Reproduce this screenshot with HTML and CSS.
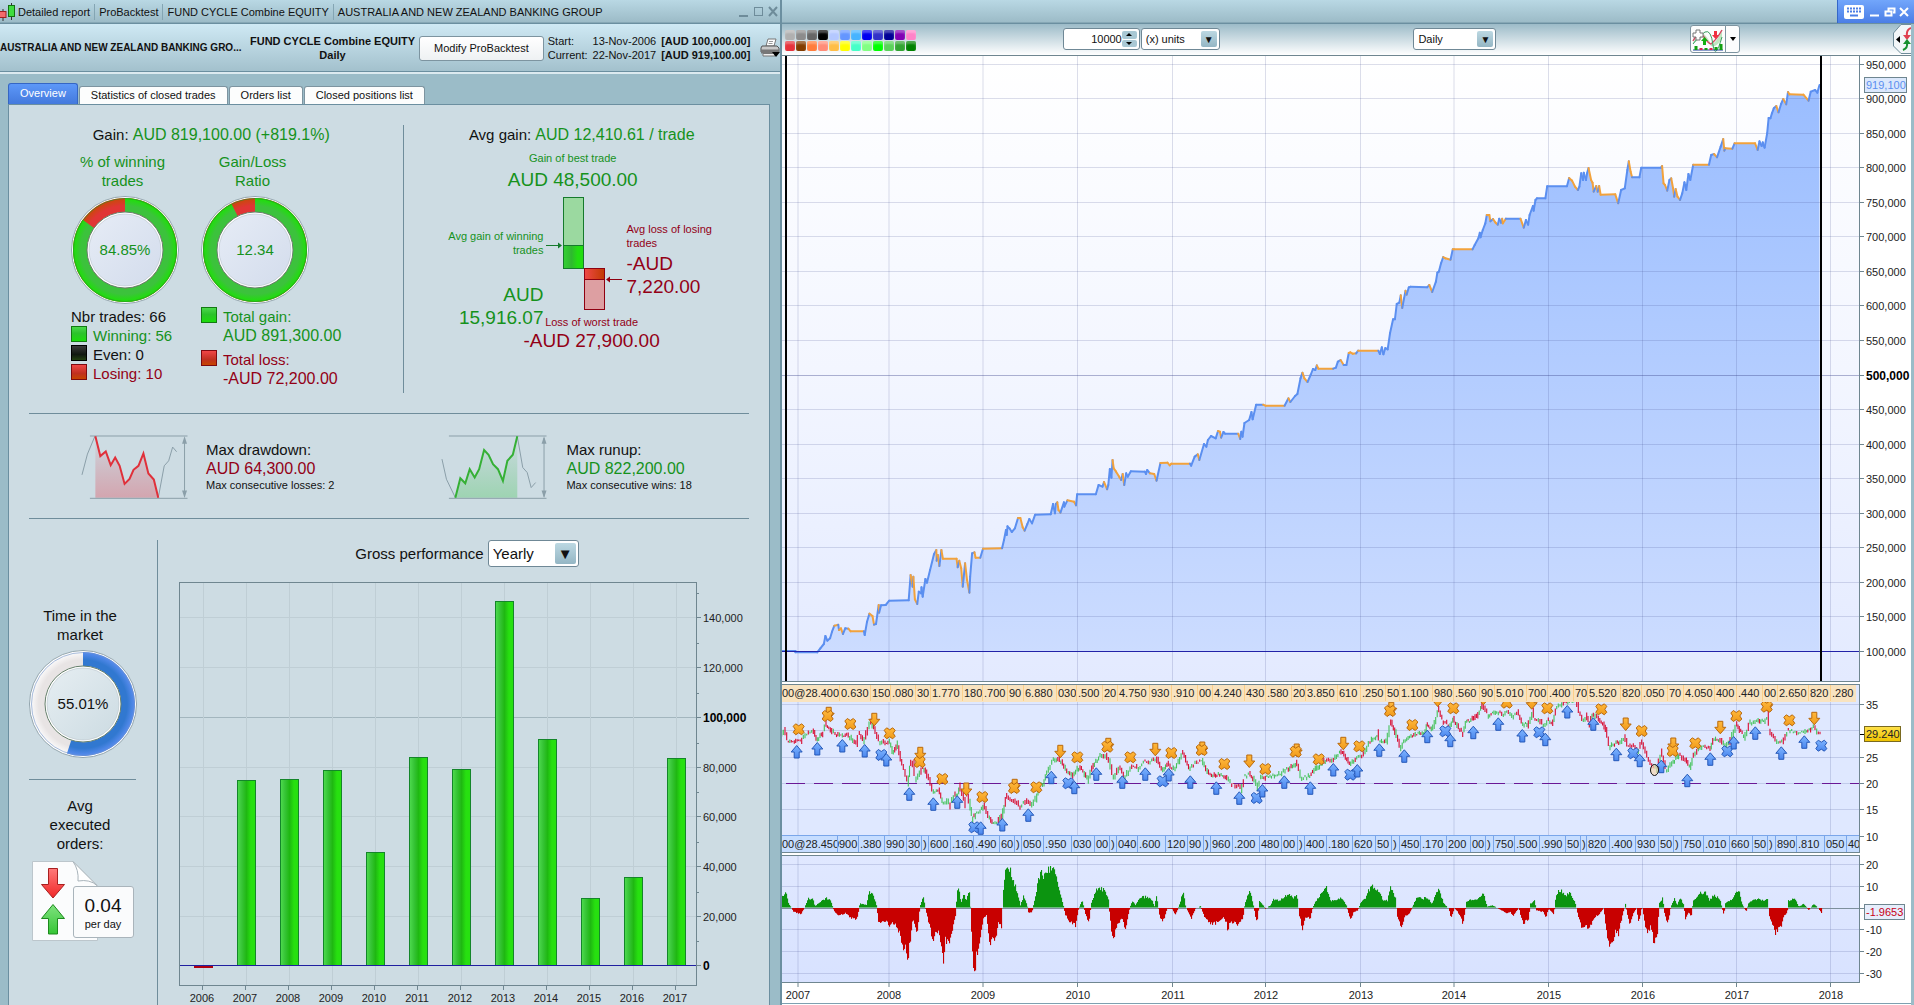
FILE: index.html
```
<!DOCTYPE html>
<html lang="en">
<head>
    <meta charset="UTF-8">
    <meta name="viewport" content="width=device-width, initial-scale=1.0">
    <title>Detailed report - ProBacktest</title>
    <link rel="stylesheet" href="styles.css">
</head>
<body>
    <section class="report">
        <div class="titlebar">
            <svg class="app-icon" width="16" height="18" viewBox="0 0 16 18">
                <path d="M3 6v12M11.500 0v17" stroke="#333"/>
                <rect x="-1" y="8.500" width="7" height="6" fill="#f36b6b" stroke="#a02020"/>
                <rect x="8.500" y="2.500" width="6" height="11" fill="#3fdc3f" stroke="#127012"/>
            </svg>
            <span>Detailed report</span>
            <span>ProBacktest</span>
            <span>FUND CYCLE Combine EQUITY</span>
            <span>AUSTRALIA AND NEW ZEALAND BANKING GROUP</span>
            <svg class="window-buttons" width="42" height="14" viewBox="0 0 42 14" fill="none" stroke="#6e8c9a" stroke-width="2">
                <path d="M1 11h9M31 2l8 9M39 2l-8 9"/>
                <rect x="16.500" y="2.500" width="8" height="8" stroke-width="1"/>
            </svg>
        </div>
        <header class="summary">
            <strong class="instrument">AUSTRALIA AND NEW ZEALAND BANKING GRO...</strong>
            <strong class="system">FUND CYCLE Combine EQUITY<br>Daily</strong>
            <button class="modify">Modify ProBacktest</button>
            <dl class="dates">
                <dt>Start:</dt><dd>13-Nov-2006</dd><dd><b>[AUD 100,000.00]</b></dd>
                <dt>Current:</dt><dd>22-Nov-2017</dd><dd><b>[AUD 919,100.00]</b></dd>
            </dl>
            <button class="print" aria-label="Print">
                <svg width="20" height="20" viewBox="0 0 20 20">
                    <path d="M6 8l2-7h8l-2 7z" fill="#fff" stroke="#777"/>
                    <path d="M9 3.500h4M8.500 5.500h4" stroke="#999"/>
                    <path d="M2 8h15l2 2v4H1v-4z" fill="#c9c9c9" stroke="#555"/>
                    <path d="M1 11.500h18v4H1z" fill="#777"/>
                    <path d="M3 15.500h12v2.500H3z" fill="#eee" stroke="#777"/>
                    <path d="M12 14h8l-4 5z" fill="#000"/>
                </svg>
            </button>
        </header>
        <nav class="tabs">
            <a href="#overview" class="active">Overview</a>
            <a href="#stats">Statistics of closed trades</a>
            <a href="#orders">Orders list</a>
            <a href="#closed">Closed positions list</a>
        </nav>
        <div class="panel" id="overview">
            <div class="top">
                <div class="gains">
                    <h2>Gain: <span class="amount win">AUD 819,100.00 (+819.1%)</span></h2>
                    <div class="donuts">
                        <div class="stat">
                            <h3 class="win">% of winning<br>trades</h3>
                            <svg class="donut" data-share="84.85" data-kind="trade" data-label="84.85%"></svg>
                            <ul>
                                <li class="plain">Nbr trades: 66</li>
                                <li class="win"><i class="chip green"></i>Winning: 56</li>
                                <li><i class="chip black"></i>Even: 0</li>
                                <li class="loss"><i class="chip red"></i>Losing: 10</li>
                            </ul>
                        </div>
                        <div class="stat">
                            <h3 class="win">Gain/Loss<br>Ratio</h3>
                            <svg class="donut" data-share="92.5" data-kind="trade" data-label="12.34"></svg>
                            <ul class="totals">
                                <li class="win"><i class="chip green"></i><span>Total gain:<br><span class="amount">AUD 891,300.00</span></span></li>
                                <li class="loss"><i class="chip red"></i><span>Total loss:<br><span class="amount">-AUD 72,200.00</span></span></li>
                            </ul>
                        </div>
                    </div>
                </div>
                <div class="averages">
                    <h2>Avg gain: <span class="amount win">AUD 12,410.61 / trade</span></h2>
                    <p class="best win"><small>Gain of best trade</small><b>AUD 48,500.00</b></p>
                    <div class="trade-range">
                        <p class="avg-win win"><small>Avg gain of winning<br>trades</small><b>AUD<br>15,916.07</b></p>
                        <svg class="range-bars" width="83" height="116" viewBox="543 196 83 116">
                            <defs>
                                <linearGradient id="rg"><stop offset="0" stop-color="#35d035"/><stop offset=".4" stop-color="#2fb82f"/><stop offset=".7" stop-color="#22dd11"/></linearGradient>
                                <linearGradient id="rr"><stop offset="0" stop-color="#f04848"/><stop offset="1" stop-color="#c03a00"/></linearGradient>
                            </defs>
                            <rect x="563.500" y="197.500" width="20" height="48" fill="#9bd9a0" stroke="#157a2c"/>
                            <rect x="563.500" y="245.500" width="20" height="23" fill="url(#rg)" stroke="#157a2c"/>
                            <rect x="584.500" y="268.500" width="20" height="11" fill="url(#rr)" stroke="#8f0010"/>
                            <rect x="584.500" y="279.500" width="20" height="30" fill="#dd9fa2" stroke="#8f0010"/>
                            <path d="M546 245.500h15" stroke="#157a2c"/><path d="M558 242.500l4 3-4 3z" fill="#157a2c"/>
                            <path d="M607 279.500h15" stroke="#8f0010"/><path d="M610 276.500l-4 3 4 3z" fill="#8f0010"/>
                        </svg>
                        <p class="avg-loss loss"><small>Avg loss of losing<br>trades</small><b>-AUD<br>7,220.00</b></p>
                        <p class="worst loss"><small>Loss of worst trade</small><b>-AUD 27,900.00</b></p>
                    </div>
                </div>
            </div>
            <div class="extremes">
                <div class="extreme">
                    <svg width="109" height="67" viewBox="160 100 220 200" preserveAspectRatio="none" fill="none">
                        <defs><linearGradient id="dd" x2="0" y2="1"><stop offset="0" stop-color="#d03040" stop-opacity=".02"/><stop offset="1" stop-color="#e04050" stop-opacity=".35"/></linearGradient></defs>
                        <path d="M191 107L201 166 212 152 222 193 231 170 240 195 250 249 260 234 268 207 278 195 288 158 298 218 309 236 318 290H191z" fill="url(#dd)"/>
                        <path class="faint" d="M180 106H377M180 292H377M371 112V287M164 222L175 160 190 107M318 290L330 195 339 180 347 139 355 153"/>
                        <path d="M371 107l5 22h-10zM371 291l5-22h-10z" fill="#8b9fa9"/>
                        <path class="trend" stroke="#e0303a" d="M191 107L201 166 212 152 222 193 231 170 240 195 250 249 260 234 268 207 278 195 288 158 298 218 309 236 318 290"/>
                    </svg>
                    <p>Max drawdown:<br><span class="amount loss">AUD 64,300.00</span><small>Max consecutive losses: 2</small></p>
                </div>
                <div class="extreme">
                    <svg width="109" height="67" viewBox="887 100 220 200" preserveAspectRatio="none" fill="none">
                        <defs><linearGradient id="ru" x2="0" y2="1"><stop offset="0" stop-color="#30b040" stop-opacity=".02"/><stop offset="1" stop-color="#30c040" stop-opacity=".3"/></linearGradient></defs>
                        <path d="M918 290L928 232 938 247 947 205 957 230 966 205 976 148 985 162 994 190 1004 205 1014 240 1023 180 1034 162 1043 107V290z" fill="url(#ru)"/>
                        <path class="faint" d="M905 106H1102M905 292H1102M1097 112V287M891 175L900 235 918 290M1043 107L1054 200 1063 215 1071 260 1080 245"/>
                        <path d="M1097 107l5 22h-10zM1097 291l5-22h-10z" fill="#8b9fa9"/>
                        <path class="trend" stroke="#35b035" d="M918 290L928 232 938 247 947 205 957 230 966 205 976 148 985 162 994 190 1004 205 1014 240 1023 180 1034 162 1043 107"/>
                    </svg>
                    <p>Max runup:<br><span class="amount win">AUD 822,200.00</span><small>Max consecutive wins: 18</small></p>
                </div>
            </div>
            <div class="bottom">
                <div class="activity">
                    <h3>Time in the<br>market</h3>
                    <svg class="donut" data-share="55.01" data-kind="market" data-label="55.01%"></svg>
                    <hr>
                    <h3>Avg<br>executed<br>orders:</h3>
                    <div class="orders">
                        <svg width="66" height="80" viewBox="0 0 66 80">
                            <defs>
                                <linearGradient id="od" x2="0" y2="1"><stop offset="0" stop-color="#ff7a7a"/><stop offset="1" stop-color="#f02828"/></linearGradient>
                                <linearGradient id="ou" x2="0" y2="1"><stop offset="0" stop-color="#7fe27f"/><stop offset="1" stop-color="#35c535"/></linearGradient>
                            </defs>
                            <path d="M.5.5H41L65.500 25V79.500H.5z" fill="#fbfcfd" stroke="#bcc6cc"/>
                            <path d="M41 .5Q47 9 46 20 58 18 65 24.500z" fill="#fff" stroke="#a9b4bb"/>
                            <path d="M16.500 7.500h9v16h7L21 37 9.500 23.500h7z" fill="url(#od)" stroke="#a82020"/>
                            <path d="M21 43.500L32.500 57.500h-7v15.500h-9V57.500h-7z" fill="url(#ou)" stroke="#1d8a1d"/>
                        </svg>
                        <p class="per-day"><b>0.04</b><small>per day</small></p>
                    </div>
                </div>
                <div class="performance">
                    <div class="period">
                        <label for="period">Gross performance</label>
                        <span class="dropdown large"><select id="period"><option>Yearly</option><option>Monthly</option></select></span>
                    </div>
                    <svg id="gross" viewBox="170 576 590 430"></svg>
                </div>
            </div>
        </div>
    </section>

    <section class="workspace">
        <div class="titlebar">
            <div class="system-buttons">
                <svg width="70" height="16" viewBox="0 0 70 16">
                    <rect y="1" width="20" height="14" rx="2" fill="#fff"/>
                    <path d="M3 4.500h14M3 7.500h14" stroke="#4c7fe6" stroke-width="2" stroke-dasharray="2 1"/>
                    <path d="M6 11.500h8" stroke="#4c7fe6" stroke-width="2"/>
                    <path d="M26 11.500h9M56 4l8 8M64 4l-8 8" stroke="#fff" stroke-width="2"/>
                    <path d="M44.500 7V4.500h6v4H49M41.500 7.500h6v4h-6z" fill="none" stroke="#fff" stroke-width="2"/>
                </svg>
            </div>
        </div>
        <div class="toolbar">
            <div class="swatches" id="swatches"></div>
            <div class="quantity">
                <span class="spinner"><input type="text" value="10000" aria-label="Quantity"><span class="steps"><button aria-label="More"></button><button aria-label="Less"></button></span></span>
                <span class="dropdown"><select aria-label="Units"><option>(x) units</option></select></span>
            </div>
            <span class="dropdown timeframe"><select aria-label="Timeframe"><option>Daily</option></select></span>
            <div class="indicators">
                <button aria-label="Add indicator">
                    <svg width="34" height="25" viewBox="0 0 34 25" fill="none">
                        <path d="M2 16Q9 2 14 8t6 10Q25 16 31 4V11Q26 21 20 19 15 8 10 11T2 17z" fill="#bfe6c0"/>
                        <path d="M2 14Q8 3 13 10T20 17Q26 12 31 3" stroke="#d24b63" stroke-width="1.500"/>
                        <path d="M2 17Q8 8 14 5T22 18 31 10" stroke="#38a060"/>
                        <path d="M5 3h4v3h3v4H9v3H5v-3H2V6h3z" fill="#fff" stroke="#777"/>
                        <path d="M23 4h3v4h2l-3.500 4L21 8h2z" fill="#f03040"/>
                        <path d="M12 18v-4h-2l3.500-4 3.500 4h-2v4z" fill="#12b012"/>
                        <path d="M2 23h30" stroke="#1c3f9a"/>
                        <path d="M5 19v4M15 21v2M25 20v3M30 17v6" stroke="#12a012" stroke-width="3"/>
                        <path d="M10 21v2M20 21v2" stroke="#e02050" stroke-width="3"/>
                    </svg>
                </button>
                <button class="more" aria-label="More indicators"></button>
            </div>
            <button class="side-tab" aria-label="Open trading panel">
                <svg width="18" height="30" viewBox="0 0 18 30" fill="none">
                    <path d="M18 .5H8L.5 9V22L8 29.500h10" fill="#f2f6f8" stroke="#6f8c9a"/>
                    <path d="M7 12v7l-4-3.500z" fill="#000"/>
                    <path d="M18 4Q13 6 14 12" stroke="#e04050" stroke-width="2"/><path d="M10 11h8l-4 5z" fill="#e04050"/>
                    <path d="M10 20h8l-4-5z" fill="#189030"/><path d="M14 19Q15 24 10 26" stroke="#189030" stroke-width="2"/>
                </svg>
            </button>
        </div>
        <div class="charts">
            <svg id="equity" viewBox="782 56 1129 627"></svg>
            <svg id="price" viewBox="782 683 1129 171"></svg>
            <svg id="oscillator" viewBox="782 854 1129 151"></svg>
        </div>
    </section>
    <script src="charts.js"></script>
</body>
</html>
```
FILE: styles.css
```
* {
    box-sizing: border-box;
}

html, body {
    height: 100%;
    margin: 0;
}

body {
    display: grid;
    grid-template-columns: 782fr 1132fr;
    grid-template-rows: 100%;
    overflow: hidden;
    background: #9bbcc8;
    color: #111;
    font: 11px/14px "Liberation Sans", Arial, sans-serif;
}

h2, h3, p, ul, dl, dd {
    margin: 0;
    padding: 0;
    font-weight: normal;
}

button, input, select {
    font: inherit;
    color: inherit;
}

.win {
    color: #16921c;
}
.loss {
    color: #930016;
}
.amount {
    font-size: 16px;
}

.titlebar {
    display: flex;
    flex: none;
    align-items: center;
    height: 24px;
    background: linear-gradient(#b9d8e4, #9bbac6);
    border-bottom: 1px solid #6b8fa0;
    box-shadow: inset 0 -1px #86a7b5;
    white-space: nowrap;
}

/* report window */
.report {
    display: flex;
    flex-direction: column;
    min-width: 0;
    overflow: hidden;
    border-right: 2px solid #6b8fa0;
}
.report .titlebar span {
    padding-right: 4px;
    line-height: 16px;
}
.report .titlebar span + span {
    padding-left: 4px;
    border-left: 1px solid #84a5b3;
}
.app-icon {
    margin-right: 2px;
}
.window-buttons {
    margin-left: auto;
}

.summary {
    display: flex;
    flex: none;
    align-items: center;
    gap: 4px;
    height: 50px;
    background: linear-gradient(#cfe9f4, #a2c0cc);
    border-bottom: 2px solid #dceaf0;
    box-shadow: 0 -1px #6b8fa0 inset;
    white-space: nowrap;
}
.instrument {
    flex: 0 1 246px;
    min-width: 0;
    font-size: 10px;
}
.system {
    text-align: center;
}
.modify {
    height: 25px;
    padding: 0 14px;
    border: 1px solid #7d94a0;
    border-radius: 3px;
    background: linear-gradient(#fff, #eef1f3);
}
.dates {
    display: grid;
    grid-template-columns: repeat(3, auto);
    gap: 0 5px;
}
.print {
    margin-left: auto;
    padding: 0;
    height: 20px;
    border: 0;
    background: none;
}

.tabs {
    display: flex;
    flex: none;
    align-items: flex-end;
    gap: 1px;
    height: 30px;
    padding-left: 8px;
}
.tabs a {
    height: 18px;
    padding: 0 11px;
    border: 1px solid #7d94a0;
    border-bottom: 0;
    border-radius: 3px 3px 0 0;
    background: #fcfdfd;
    color: #111;
    line-height: 17px;
    text-decoration: none;
}
.tabs .active {
    height: 21px;
    background: linear-gradient(#5d98f8, #4379dd);
    border-color: #3566c4;
    color: #fff;
    line-height: 19px;
}

.panel {
    display: flex;
    flex: 1;
    flex-direction: column;
    margin: 0 10px 0 8px;
    padding: 20px 20px 0;
    border: 1px solid #6b8fa0;
    border-bottom: 0;
    background: #cddce3;
    font-size: 15px;
    line-height: 19px;
}
.panel h2, .panel h3 {
    font-size: 15px;
    line-height: 19px;
    text-align: center;
}
.panel small {
    display: block;
    font-size: 11px;
    line-height: 14px;
}
.panel p b {
    display: block;
    font-size: 19px;
    font-weight: normal;
    line-height: 23px;
}

.top {
    display: grid;
    grid-template-columns: 376fr 345fr;
    padding-bottom: 20px;
    border-bottom: 1px solid #6f8d9b;
}
.gains {
    height: 268px;
    border-right: 1px solid #6f8d9b;
}
.donuts {
    display: flex;
    gap: 22px;
    margin-top: 6px;
    padding-left: 42px;
}
.stat {
    width: 108px;
    white-space: nowrap;
}
.stat h3, .activity h3 {
    padding-right: 5px;
}
.donut {
    display: block;
    width: 108px;
    height: 108px;
    margin: 6px 0 3px;
}
.stat ul {
    list-style: none;
}
.stat li {
    display: flex;
    gap: 6px;
}
.totals li {
    margin-bottom: 5px;
}
.chip {
    flex: none;
    width: 16px;
    height: 16px;
    border: 1px solid #127a12;
}
.green {
    background: linear-gradient(#4bd84b, #2cc22c 45%, #1bdc0b);
}
.black {
    background: linear-gradient(#3a3a3a, #101810 60%, #224010);
    border-color: #000;
}
.red {
    background: linear-gradient(#f04646, #c03020 60%, #c64500);
    border-color: #7d0a10;
}
.gains h2, .averages h2 {
    height: 21px;
}
.gains h2 {
    padding-right: 10px;
}
.averages h2 {
    padding-left: 10px;
}

.best {
    padding-top: 5px;
    padding-right: 8px;
    text-align: center;
}
.best b {
    margin-top: 3px;
}
.trade-range {
    display: grid;
    grid-template-columns: 139px 83px 1fr;
    grid-template-rows: 118px auto;
    margin-top: 5px;
    white-space: nowrap;
}
.avg-win {
    grid-row: 1 / 3;
    padding-top: 33px;
    text-align: right;
}
.avg-win b {
    margin-top: 26px;
}
.avg-loss {
    padding-top: 26px;
}
.avg-loss b {
    margin-top: 2px;
}
.worst {
    grid-column: 2 / 4;
    grid-row: 2;
    justify-self: start;
    margin-top: 1px;
    margin-left: -20px;
    text-align: center;
}
.worst b {
    line-height: 28px;
}

.extremes {
    display: grid;
    grid-template-columns: 361fr 309fr;
    height: 105px;
    padding: 20px 0 0 51px;
    border-bottom: 1px solid #6f8d9b;
}
.extreme {
    display: flex;
    gap: 17px;
}
.extreme p {
    padding-top: 6px;
    white-space: nowrap;
}
.faint {
    stroke: #8b9fa9;
    vector-effect: non-scaling-stroke;
}
.trend {
    stroke-width: 2;
    vector-effect: non-scaling-stroke;
}

.bottom {
    display: grid;
    flex: 1;
    grid-template-columns: 129px 1fr;
    margin: 21px -20px 0 0;
}
.activity {
    display: flex;
    flex-direction: column;
    align-items: center;
    padding: 66px 21px 0 0;
    border-right: 1px solid #6f8d9b;
}
.activity hr {
    width: 100%;
    margin: 18px 0 16px;
    border: 0;
    border-top: 1px solid #6f8d9b;
}
.orders {
    position: relative;
    margin-top: 8px;
    padding-right: 36px;
}
.orders svg {
    display: block;
}
.per-day {
    position: absolute;
    right: 0;
    bottom: 3px;
    width: 61px;
    height: 52px;
    padding-top: 7px;
    border: 1px solid #a9b4bb;
    border-radius: 3px;
    background: #fafbfc;
    text-align: center;
}
.performance {
    padding: 0 9px 0 12px;
}
.period {
    display: flex;
    justify-content: center;
    align-items: center;
    gap: 4px;
    padding-left: 4px;
}
#gross {
    display: block;
    width: 100%;
    margin-top: 9px;
}

/* form controls */
.dropdown {
    position: relative;
    display: block;
    width: 79px;
    height: 22px;
}
.dropdown select {
    width: 100%;
    height: 100%;
    padding: 0 4px;
    border: 1px solid #6f8896;
    border-radius: 3px;
    background: #fff;
    appearance: none;
}
.dropdown::after {
    content: "\25BC";
    position: absolute;
    top: 3px;
    right: 3px;
    bottom: 3px;
    width: 16px;
    border-radius: 2px;
    background: linear-gradient(#bcd8e2, #94b6c4);
    font-size: 10px;
    line-height: 17px;
    text-align: center;
    pointer-events: none;
}
.large {
    width: 91px;
    height: 27px;
}
.large::after {
    width: 21px;
    font-size: 15px;
    line-height: 21px;
}
.spinner {
    display: flex;
    width: 77px;
    height: 22px;
    padding: 2px;
    border: 1px solid #6f8896;
    border-radius: 3px;
    background: #fff;
}
.spinner input {
    width: 56px;
    padding: 0;
    border: 0;
    background: none;
    text-align: right;
}
.steps {
    display: flex;
    flex-direction: column;
    gap: 1px;
    margin-left: auto;
}
.steps button {
    display: flex;
    flex: 1;
    justify-content: center;
    align-items: center;
    width: 15px;
    padding: 0;
    border: 0;
    border-radius: 2px;
    background: #a9c8d4;
}
.steps button::after, .more::after {
    content: "";
    border: 3px solid transparent;
    border-top: 0;
    border-bottom-color: #000;
}
.steps button + button::after {
    border-top: 3px solid #000;
    border-bottom: 0;
}

/* chart workspace */
.workspace {
    display: flex;
    flex-direction: column;
    min-width: 0;
    border-right: 3px solid #9bbcc8;
    background: #fff;
}
.workspace .titlebar {
    justify-content: flex-end;
    margin-right: -3px;
}
.system-buttons {
    display: flex;
    align-items: center;
    height: 23px;
    padding: 0 0 0 6px;
    background: linear-gradient(#72a6fb, #4b7ee6);
    border-left: 1px solid #3467c8;
}
.toolbar {
    position: relative;
    display: grid;
    grid-template-columns: 281fr 351fr 277fr 203fr 18px;
    flex: none;
    height: 32px;
    background: linear-gradient(#9cbbc8, #fff);
    border-bottom: 1px solid #6f8690;
}
.swatches {
    display: grid;
    grid-template-columns: repeat(12, 10px);
    gap: 1px;
    align-content: center;
    padding-left: 3px;
}
.swatches button {
    height: 10px;
    padding: 0;
    border: 0;
    border-radius: 2px;
    box-shadow: inset 0 3px 2px rgba(255, 255, 255, 0.3);
}
.quantity {
    display: flex;
    gap: 1px;
    padding-top: 4px;
}
.timeframe {
    width: 83px;
    margin-top: 4px;
}
.indicators {
    display: flex;
    margin-top: 1px;
}
.indicators button {
    display: flex;
    justify-content: center;
    align-items: center;
    width: 36px;
    height: 28px;
    padding: 0;
    border: 1px solid #7d94a0;
    border-radius: 3px 0 0 3px;
    background: #fcfdfd;
}
.indicators .more {
    width: 15px;
    margin-left: -1px;
    border-radius: 0 3px 3px 0;
}
.more::after {
    border-top: 4px solid #000;
    border-bottom: 0;
}
.side-tab {
    padding: 0;
    border: 0;
    background: none;
}
.charts {
    flex: 1;
    min-height: 0;
}
.charts svg {
    display: block;
    width: 100%;
}

/* svg text */
svg text {
    font-size: 11px;
    fill: #222;
}
svg .major {
    font-size: 12px;
    font-weight: bold;
    fill: #000;
}
svg .center {
    text-anchor: middle;
}
.donut text {
    font-size: 15px;
}
```
FILE: charts.js
```
const INK = '#6f8690';
const YEARS_X = [798, 889, 983, 1077.5, 1172.5, 1265.5, 1360.5, 1454, 1548.5, 1642.5, 1736.5, 1830.5];

// small repeatable noise so the charts look the same on each load
let seed = 7;
function noise() {
    seed = (seed * 16807) % 2147483647;
    return seed / 2147483647;
}

function line(x1, y1, x2, y2, color, width = 1, dash = '') {
    return `<path d="M${x1} ${y1}L${x2} ${y2}" stroke="${color}" stroke-width="${width}" ${dash && `stroke-dasharray="${dash}"`} fill="none"/>`;
}
function text(x, y, label, cls = '') {
    return `<text x="${x}" y="${y}" class="${cls}">${label}</text>`;
}
function rect(x, y, w, h, fill, more = '') {
    return `<rect x="${x}" y="${y}" width="${w}" height="${h}" fill="${fill}" ${more}/>`;
}
function gradient(id, stops, dir = 'x2="0" y2="1"') {
    return `<linearGradient id="${id}" ${dir}>` + stops.map((c, i) => `<stop offset="${i / (stops.length - 1)}" stop-color="${c}"/>`).join('') + '</linearGradient>';
}
function points(str, x0, y0, kx, ky) {
    return str.trim().split(/\s+/).map(p => {
        const [x, y] = p.replace('o', '').split(',').map(Number);
        return { x: x0 + x / kx, y: y0 + y / ky, down: p[0] == 'o' };
    });
}

// toolbar colours
const colors = ['#b0b0b0', '#8c8c8c', '#666', '#000', '#b4c8ff', '#6496ff', '#46b4ff', '#0000f0', '#3232c8', '#000096', '#8200b4', '#ff82c8',
    '#e6323c', '#823c00', '#ff7d3c', '#ff8c78', '#ffbe46', '#ffff00', '#46ffc8', '#82ff82', '#00ff00', '#5ad25a', '#32a532', '#008200'];
document.getElementById('swatches').innerHTML = colors.map(c => `<button aria-label="${c}" style="background-color: ${c}"></button>`).join('');

// donuts
document.querySelectorAll('.donut').forEach((svg, i) => {
    const market = svg.dataset.kind == 'market';
    const share = Number(svg.dataset.share);
    const angle = share / 100 * 2 * Math.PI;
    const x = 54 + 45 * Math.sin(angle), y = 54 - 45 * Math.cos(angle);
    const ring = (id, a, b) => `<radialGradient id="${id}${i}" gradientUnits="userSpaceOnUse" cx="54" cy="54" r="52"><stop offset=".74" stop-color="${a}"/><stop offset=".85" stop-color="${a}"/><stop offset="1" stop-color="${b}"/></radialGradient>`;
    svg.setAttribute('viewBox', '0 0 108 108');
    svg.innerHTML = '<defs>'
        + (market ? ring('on', '#3178d0', '#5a8df0') + ring('off', '#e8e4e4', '#fbfafa') : ring('on', '#3cc23c', '#1ce205') + ring('off', '#e03535', '#c84a08'))
        + gradient('disc' + i, market ? ['#e6eef2', '#ccdbe2'] : ['#e6ecf6', '#d3dcec'], 'x2="1" y2="1"') + '</defs>'
        + '<circle cx="54" cy="54" r="53.5" fill="#fff" stroke="#7b909b" stroke-width=".8"/>'
        + `<circle cx="54" cy="54" r="45" fill="none" stroke="url(#off${i})" stroke-width="14"/>`
        + `<path d="M54 9A45 45 0 1 1 ${x} ${y}" fill="none" stroke="url(#on${i})" stroke-width="14"/>`
        + `<circle cx="54" cy="54" r="51.5" fill="none" stroke="${market ? '#6f92c8' : '#2c8c2c'}" stroke-width=".6"/>`
        + '<circle cx="54" cy="54" r="38" fill="#fff" stroke="#66806c"/>'
        + `<circle cx="54" cy="54" r="36" fill="url(#disc${i})" stroke="#a9b6bf" stroke-width=".5"/>`
        + `<text x="54" y="59" class="center" style="fill: ${market ? '#111' : '#16921c'}">${svg.dataset.label}</text>`;
});

// yearly bars
function drawGross() {
    const tops = [967, 780, 779, 770, 852, 757, 769, 601, 739, 898, 877, 758];
    let out = '<defs>' + gradient('bar', ['#4fdc4f', '#36c436', '#1fb812', '#27e010', '#27e010'], '') + '</defs>';
    for (let i = 0; i <= 7; i++) {
        const y = Math.round(965.3 - i * 49.7) + 0.5;
        out += line(180, y, 696, y, i == 5 ? '#a3b6be' : '#bfced5') + line(696, y, 701, y, INK);
        const label = i ? i * 20 + ',000' : '0';
        out += text(703, y + 4, label, i % 5 ? '' : 'major');
        out += line(696, Math.round(y - 25) + 0.5, 699, Math.round(y - 25) + 0.5, INK);
    }
    tops.forEach((top, i) => {
        const x = 194 + i * 43;
        out += line(x + 9.5, 583, x + 9.5, 985, '#bfced5') + line(x + 8.5, 986, x + 8.5, 990, INK);
        out += text(x + 8, 1002, 2006 + i, 'center');
        out += i ? rect(x + 0.5, top + 0.5, 18, 965 - top, 'url(#bar)', 'stroke="#14862a"') : rect(x, 965, 19, 3, '#b00010');
    });
    out += rect(179.5, 582.5, 517, 403, 'none', `stroke="${INK}"`) + line(180, 965.5, 696, 965.5, '#2020a0');
    document.getElementById('gross').innerHTML = out;
}

// equity curve
function drawEquity() {
    const early = points(`-20,993 14,993 14,997 70,997 78,985 87,972 91,948 96,962 103,955 108,935 114,917 o124,914 126,930 o131,925 o136,942
        142,925 150,926 o156,934 o190,934 192,945 198,905 204,881 o212,888 o216,914 221,912 228,855 o229,878 234,856 246,855 255,842 305,841
        310,765 o315,800 317,770 o321,838 o327,852 331,815 337,820 338,802 341,830 348,777 352,788 360,750 370,703 376,690 o377,722 380,705
        o384,738 389,690 o393,716 o428,716 o431,742 435,722 o440,745 o444,800 450,730 o455,780 o461,818 463,770 468,700 474,697 o477,713
        o489,713 496,686 o545,685 550,660 555,630 557,645 559,619 564,625 570,636 578,625 586,594 o592,594 o598,622 o603,632 610,612 615,597
        622,610 630,584 670,583 676,552 681,580 683,552 687,547 o690,570 o695,578 704,547 705,560 713,541 o730,545 o735,556 738,523 786,523
        793,495 803,500 807,486 o815,508 818,495 822,447 826,473 829,420 o832,445 o838,455 o846,470 o851,480 855,462 o859,495 864,460 868,470
        876,454 912,455 915,462 918,450 925,460 o936,462 o942,482 952,429 o970,428 o976,436 o980,431 o1028,431 1031,437 1040,410 1048,403
        o1052,420 1064,372 1070,380 1074,360 1082,348 1094,355 1100,333 o1105,335 o1108,353 1114,336 1118,341 1152,341 o1157,357 1160,335
        1163,350 1168,309 1180,300 1186,276 1189,298 1198,254 1216,254 o1222,257 o1271,257 1281,235 o1286,246 1298,228 1304,222 1312,175
        1317,158 o1322,175 o1330,186 1338,165 1344,147 1350,150 1354,136 o1358,146 o1396,146 1403,143 1408,125 1415,120 o1423,135 1430,135
        1436,99 o1440,97 o1446,101 o1455,100 1460,92 o1512,92 1516,102 1521,82 1525,103 1530,84 1536,88 1542,40`, 790, 320, 2.57, 3);
    const late = points(`145,958 150,958 155,912 162,908 166,886 o170,924 175,895 179,872 o182,884 188,862 193,860 238,862 244,855 o252,876
        262,845 266,818 270,815 276,790 282,771 o288,775 o302,779 308,748 o312,748 o362,748 368,735 378,715 382,698 384,712 390,690 397,670
        401,645 o408,645 o411,664 418,657 o425,668 o431,674 435,656 440,668 443,656 o445,670 o453,656 493,656 o502,683 508,660 514,674
        518,645 527,618 529,632 534,600 538,595 561,595 566,559 620,559 626,534 o634,542 o642,560 o650,570 654,560 659,520 664,540 666,518
        672,540 675,520 679,504 o686,540 o690,548 o693,575 700,558 o704,575 708,558 o712,584 o752,583 o760,610 768,570 778,565 785,510
        789,484 o794,515 o798,532 818,532 823,503 877,503 880,498 o884,550 o888,555 o894,572 900,540 905,535 o910,565 o913,590 917,567
        o922,590 o929,600 935,580 941,547 946,570 952,522 957,540 965,494 o1008,494 1014,465 1022,462 o1030,472 1040,440 1047,417 o1050,452
        1053,445 o1072,446 1078,430 o1134,430 o1141,450 1146,424 1152,438 1155,427 1160,443 1167,400 1171,354 1176,355 1180,340 1185,325
        1192,318 o1198,337 1205,312 1211,297 o1219,313 1224,276 o1228,283 o1266,284 o1280,302 1286,275 1298,270 1304,278 1310,255`, 1340, 0, 2.732, 3);
    const curve = early.concat(late);

    let out = '<defs>' + gradient('sky', ['#ffffff', '#f3f6ff', '#e3eaff']) + gradient('area', ['#9abdff', '#ccdcff']) + '</defs>';
    out += rect(782, 56, 1077, 625, 'url(#sky)');
    out += `<path d="M782 651.5L${curve.map(p => p.x.toFixed(1) + ' ' + p.y.toFixed(1)).join('L')}V651.5z" fill="url(#area)"/>`;
    for (const x of YEARS_X) out += line(x, 56, x, 681, 'rgba(60,70,140,.18)');
    for (let v = 950; v >= 100; v -= 50) {
        const y = Math.round(63.5 + (950 - v) * 0.6912) + 0.5;
        out += line(782, y, 1859, y, v == 500 ? 'rgba(60,70,140,.4)' : 'rgba(60,70,140,.18)') + line(1860, y, 1864, y, INK);
        out += text(1866, y + 4, v + ',000', v == 500 ? 'major' : '');
    }
    curve.forEach((p, i) => {
        if (i) out += `<path d="M${curve[i - 1].x} ${curve[i - 1].y}L${p.x} ${p.y}" stroke="${p.down ? '#f2a23c' : '#5b8ff0'}" stroke-width="2" stroke-linecap="round"/>`;
    });
    out += line(782, 651.5, 1859, 651.5, '#2222a8') + line(786, 56, 786, 681, '#000', 2) + line(1821, 56, 1821, 681, '#000', 2);
    out += line(1859.5, 56, 1859.5, 682, INK) + line(782, 681.5, 1860, 681.5, INK);
    out += rect(1864.5, 77.5, 42, 15, '#dbe8fc', `stroke="${INK}"`) + '<text x="1866" y="89" style="fill: #5b8ff0">919,100</text>';
    document.getElementById('equity').innerHTML = out;
}

// price with order markers
function drawPrice() {
    const path = points(`5,195 15,185 25,212 65,212 80,190 100,185 112,208 128,190 138,165 155,180 165,195 200,195 218,210 232,215 238,190
        252,210 272,155 285,180 300,222 315,215 328,218 340,250 352,225 365,280 385,335 392,275 402,290 408,330 428,290 440,310 460,365
        478,360 490,400 500,390 510,405 525,370 532,380 540,350 555,395 560,365 570,400 578,445 590,430 600,425 613,408 628,440 640,462
        655,455 668,435 680,380 690,390 705,390 720,410 740,390 755,405 770,380 778,345 792,340 800,310 820,270 838,265 860,300 878,315
        900,290 925,330 935,295 960,258 975,255 990,280 1000,325 1020,290 1035,320 1055,290 1075,295 1095,275 1110,275`, 780, 670, 3, 3)
        .concat(points(`5,270 20,265 38,300 55,285 75,298 98,250 120,298 140,275 158,275 180,315 205,315 230,320 245,345 265,345 275,355
        285,320 300,310 312,330 322,350 332,325 360,320 395,308 415,295 440,280 455,325 475,320 500,295 530,270 550,270 573,245 590,265
        602,282 620,262 640,255 660,215 685,195 690,215 712,208 722,155 738,190 752,232 770,205 800,190 825,185 832,165 848,175 866,122
        880,155 900,165 912,150 938,190 950,155 975,145 1000,105 1015,135 1040,125 1060,135 1075,125 1085,140 1105,130 1118,165 1135,160`, 1150, 670, 3, 3))
        .concat(points(`10,125 15,150 30,155 45,165 55,150 68,160 80,110 100,97 140,92 150,135 160,150 170,140 178,160 190,130 205,145
        222,165 230,190 240,230 258,220 270,215 285,200 295,225 310,225 325,240 335,220 350,255 365,285 380,295 395,245 410,300 425,280
        450,255 465,270 482,290 490,255 510,235 525,230 540,235 552,210 570,208 585,225 600,215 620,160 632,185 645,200 660,160 680,155
        705,150 715,140 720,185 740,215 760,210 775,180 790,185 805,190 825,185 850,172 865,185 875,192`, 1530, 670, 3, 3));

    let out = '<defs>'
        + '<clipPath id="body"><rect x="782" y="702" width="1077" height="150"/></clipPath>'
        + '<clipPath id="plot"><rect x="782" y="684" width="1077" height="168"/></clipPath>'
        + gradient('gold', ['#ffb83c', '#f09a1a']) + gradient('azure', ['#7db4ff', '#4a86ee']) + gradient('tag', ['#ffe14a', '#eec200'])
        + '<path id="up" d="M0-6.5L5.500 0h-3V6h-5V0h-3z" fill="url(#azure)" stroke="#2558b8"/>'
        + '<path id="down" d="M0 6.5L5.500 0h-3V-6h-5V0h-3z" fill="url(#gold)" stroke="#b8680c"/>'
        + '<path id="cross" d="M-3-5.500L0-3.500 3-5.500 5.500-3 3.500 0 5.500 3 3 5.500 0 3.500-3 5.500-5.500 3-3.500 0-5.500-3z" stroke-linejoin="round"/>'
        + '</defs>';
    out += rect(782, 684, 1077, 168, '#dfe8ff');
    for (const x of YEARS_X) out += line(x, 684, x, 852, 'rgba(60,70,140,.18)');
    [35, 30, 25, 20, 15, 10].forEach((v, i) => {
        const y = Math.round(704 + i * 26.3) + 0.5;
        out += line(782, y, 1859, y, 'rgba(60,70,140,.18)');
        // the last price tag sits on the 30 mark
        if (v != 30) out += line(1860, y, 1864, y, INK) + text(1866, y + 4, v);
    });
    out += line(786, 783.5, 1859, 783.5, '#6a1896', 1, '19 9');

    out += '<g clip-path="url(#body)">';
    for (let i = 1; i < path.length; i++) {
        const a = path[i - 1], b = path[i];
        const n = Math.max(1, Math.round((b.x - a.x) / 1.5));
        for (let k = 0; k < n; k++) {
            const x = a.x + (b.x - a.x) * k / n;
            const y = a.y + (b.y - a.y) * k / n + noise() * 3 - 1.5;
            const h = Math.abs(b.y - a.y) / n / 2 + 0.5 + noise() * 1.8;
            const rising = noise() < (b.y < a.y ? 0.75 : 0.2);
            out += line(x.toFixed(1), (y - h).toFixed(1), x.toFixed(1), (y + h).toFixed(1), rising ? '#44c25a' : '#d80a30', 1.1);
        }
    }

    const marks = [
        ['down', 780, '146,130 283,148 421,250 559,357 704,346 841,244 985,223'],
        ['down', 1150, '16,238 157,234 298,273 440,240 580,220 724,115 863,90 1000,85 1145,98'],
        ['down', 1530, '287,162 430,222 571,172 712,104 853,145'],
        ['gold', 780, '56,178 143,138 211,162 329,190 419,276 487,327 607,381 702,354 769,352 892,262 982,230 1051,262'],
        ['gold', 1150, '64,249 155,240 223,282 346,297 437,245 506,268 628,229 720,123 787,165 910,115 1070,98'],
        ['gold', 1530, '52,115 214,118 335,183 428,243 496,220 619,138 710,110 778,151'],
        ['azure', 780, '304,255 583,472 865,340'],
        ['azure', 1150, '38,334 320,384 601,314 886,184'],
        ['azure', 1530, '28,187 310,250 592,244 874,227'],
        ['up', 780, '50,246 112,237 187,228 254,243 319,270 388,373 460,403 532,397 602,475 667,465 745,436 814,323 883,353 949,313 1027,337 1096,313'],
        ['up', 1150, '56,315 121,337 199,355 268,385 337,363 403,337 481,355 550,300 622,303 688,241 763,259 832,200 901,212 970,188 1045,163 1117,198'],
        ['up', 1530, '46,209 112,126 190,163 259,254 329,272 394,290 472,332 541,268 611,219 676,190 754,250 823,217']
    ];
    for (const [kind, x0, list] of marks) {
        for (const p of points(list, x0, 670, 3, 3)) {
            const cross = kind == 'gold' || kind == 'azure';
            const paint = cross ? `fill="url(#${kind})" stroke="${kind == 'gold' ? '#b8680c' : '#2558b8'}"` : '';
            out += `<use href="#${cross ? 'cross' : kind}" x="${p.x.toFixed(1)}" y="${p.y.toFixed(1)}" ${paint}/>`;
        }
    }
    out += '<ellipse cx="1654.5" cy="770" rx="4" ry="5.5" fill="#f5d7b0" fill-opacity=".7" stroke="#111"/></g>';

    // fills along the top (sells) and bottom (buys)
    const sells = [
        [780, '5:00@28.400 183:0.630 276:150 337:.080 411:30 455:1.770 551:180 613:.700 688:90 735:6.880 833:030 894:.500 973:20 1018:4.750'],
        [1150, '4:930 70:.910 146:00 191:4.240 287:430 352:.580 428:20 472:3.850 568:610 635:.250 710:50 754:1.100 851:980 916:.560 992:90 1037:5.010'],
        [1530, '-7:700 58:.400 134:70 178:5.520 277:820 339:.050 416:70 464:4.050 559:400 625:.440 701:00 746:2.650 841:820 907:.280']
    ];
    const buys = [
        [780, '5:00@28.450 177:900 240:.380 317:990 384:30 430:) 450:600 515:.160 585:.490 663:60 708:) 730:050 796:.950 879:030 947:00 992:) 1013:040 1077:.600'],
        [1150, '50:120 118:90 165:) 185:960 253:.200 332:480 400:00 446:) 467:400 535:.180 613:620 681:50 730:) 752:450 817:.170 894:200 965:00 1012:) 1035:750 1099:.500'],
        [1530, '32:.990 110:50 155:) 175:820 243:.400 322:930 391:50 435:) 458:750 524:.010 602:660 673:50 718:) 740:890 803:.810 887:050 955:40']
    ];
    out += rect(782, 685, 1074, 17, '#f8e3c0') + rect(782, 835, 1077, 17, '#c6ddff') + line(782, 835.5, 1859, 835.5, '#7aa6ea') + '<g clip-path="url(#plot)">';
    const strip = (groups, y, edge) => {
        for (const [x0, list] of groups) {
            for (const item of list.split(' ')) {
                const [x, label] = item.split(':');
                const px = Math.round(x0 + x / 3);
                out += line(px - 1.5, y - 12, px - 1.5, y + 4, edge) + text(px, y, label);
            }
        }
    };
    strip(sells, 697, '#fcd08a');
    strip(buys, 848, '#7aa6ea');
    out += '</g>' + rect(781.5, 684.5, 1078, 168, 'none', `stroke="${INK}"`);
    out += line(1860, 734.5, 1864, 734.5, '#000') + rect(1864.5, 726.5, 36, 15, 'url(#tag)', 'stroke="#7a6a20"') + text(1866, 738, '29.240');
    document.getElementById('price').innerHTML = out;
}

// oscillator histogram
function drawOscillator() {
    const path = points(`5,680 15,657 25,700 40,725 62,732 72,712 85,682 98,685 103,708 120,695 138,682 150,690 160,720 175,738 195,728
        210,745 230,750 238,700 258,705 262,680 268,662 280,675 290,712 292,750 300,765 315,755 330,770 342,760 350,780 360,800 367,850
        375,830 381,883 390,815 398,745 410,810 418,712 428,675 435,715 442,745 458,820 465,790 478,800 488,890 495,815 510,820 525,740
        530,660 535,650 542,700 550,665 557,690 568,660 572,760 579,918 584,915 590,850 600,820 608,750 618,735 628,830 645,810 655,760 664,775
        667,680 672,610 682,580 695,610 710,660 720,705 730,675 740,705 745,730 755,725 760,700 775,620 782,595 790,615 800,590 820,590
        830,630 845,690 855,735 875,765 887,768 893,720 905,690 915,730 925,765 932,700 945,660 958,650 970,655 985,690 988,740 998,820
        1010,770 1025,745 1035,780 1045,725 1055,690 1065,705 1080,680 1095,678 1110,685`, 780, 670, 3, 3)
        .concat(points(`5,690 12,708 18,675 28,740 38,755 50,715 65,715 75,735 88,700 98,660 105,705 115,730 123,745 135,715 150,708
        160,735 175,760 190,765 205,755 220,745 230,760 232,815 235,760 260,765 278,745 283,700 290,680 298,658 308,700 320,765 327,690 345,715
        360,705 370,685 385,690 400,680 415,665 428,680 440,675 447,740 457,780 465,745 480,745 487,712 497,690 510,670 528,650 540,690
        555,690 572,680 588,705 600,752 610,725 622,720 630,700 645,680 658,650 670,645 685,660 698,690 712,690 718,645 735,680 740,735
        752,770 765,740 780,725 790,700 803,675 815,685 830,678 845,700 860,660 866,655 880,700 895,715 902,745 912,712 925,730 938,765
        948,695 965,685 985,685 998,662 1010,710 1025,705 1045,715 1070,730 1080,725 1088,738 1105,712 1118,765 1135,745`, 1150, 670, 3, 3))
        .concat(points(`0,700 12,690 18,720 40,725 45,745 55,715 70,735 77,670 88,655 105,675 120,665 135,700 145,745 155,785 165,765
        178,780 190,745 205,735 220,712 225,770 236,830 247,815 255,785 265,795 275,740 285,700 297,770 305,740 318,712 325,765 335,705
        345,770 352,790 362,770 370,820 382,785 386,700 397,680 402,730 412,765 420,715 432,680 440,705 450,680 460,705 465,745 475,725
        482,745 488,690 505,668 525,662 537,690 550,670 568,685 580,735 585,700 605,685 625,655 635,700 647,725 655,695 680,685 700,690
        712,685 716,740 735,790 755,765 760,735 770,730 774,690 795,685 805,710 820,700 835,720 850,700 865,715 872,728 876,725`, 1530, 670, 3, 3));

    let out = '<defs>' + gradient('osc', ['#e0e8ff', '#d8e2ff']) + '</defs>' + rect(782, 856, 1077, 126, 'url(#osc)');
    for (const x of YEARS_X) out += line(x, 856, x, 982, 'rgba(60,70,140,.18)');
    [20, 10, 0, -10, -20, -30].forEach((v, i) => {
        const y = Math.round(864 + i * 21.8) + 0.5;
        out += line(782, y, 1859, y, v ? 'rgba(60,70,140,.18)' : '#7d8f9c') + line(1860, y, 1864, y, INK);
        if (v) out += text(1866, y + 4, v);
    });
    let k = 0;
    for (let x = 782; x < 1822; x++) {
        while (k < path.length - 2 && path[k + 1].x < x) k++;
        const a = path[k], b = path[k + 1];
        const y = a.y + (b.y - a.y) * (x - a.x) / (b.x - a.x);
        const h = (y - 907.5) * (0.8 + noise() * 0.25);
        if (h < -0.5) out += rect(x, (907.5 + h).toFixed(1), 1.1, (-h).toFixed(1), '#0c9410');
        if (h > 0.5) out += rect(x, 908, 1.1, h.toFixed(1), '#c80000');
    }
    out += rect(781.5, 855.5, 1078, 127, 'none', `stroke="${INK}"`);
    YEARS_X.forEach((x, i) => out += line(x, 983, x, 987, INK) + text(Math.round(x), 999, 2007 + i, 'center'));
    out += rect(1864.5, 904.5, 40, 15, '#e6eefc', `stroke="${INK}"`) + '<text x="1866" y="916" style="fill: #c80018">-1.9653</text>';
    out += line(782, 1003.5, 1911, 1003.5, '#7da0b0');
    document.getElementById('oscillator').innerHTML = out;
}

drawGross();
drawEquity();
drawPrice();
drawOscillator();
```
